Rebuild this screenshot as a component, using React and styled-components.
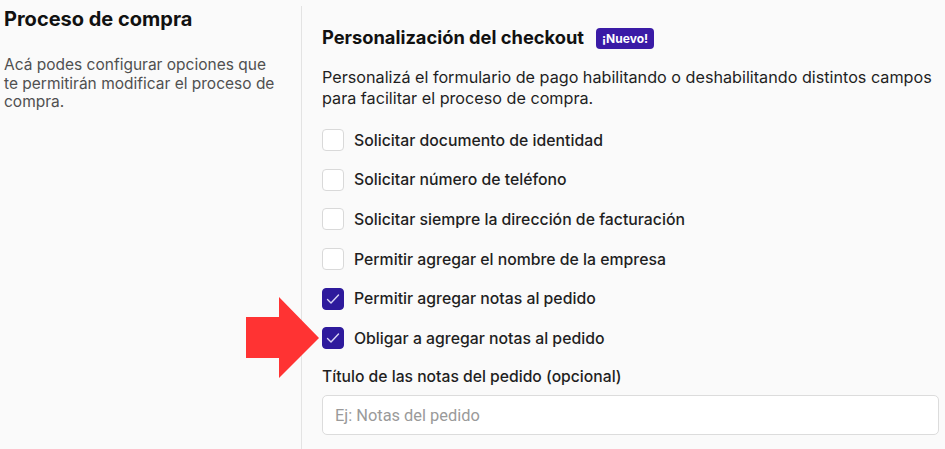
import React from "react";
import styled, { createGlobalStyle } from "styled-components";

const GlobalStyle = createGlobalStyle`
    html, body {
        margin: 0;
        padding: 0;
        background: #fafafa;
        font-family: Inter, "Noto Sans", sans-serif;
        color: #1f1f1f;
    }
`

const Page = styled.div`
    position: relative;
    display: grid;
    grid-template-columns: 301px 1fr;
    width: 945px;
    height: 449px;
    overflow: hidden;
`

const Side = styled.div`
    padding: 6px 20px 0 4px;
`

const SideTitle = styled.h1`
    margin: 0;
    font-size: 20px;
    line-height: 26px;
    font-weight: 700;
    color: #111;
`

const SideText = styled.p`
    margin: 24px 0 0;
    font-size: 15.5px;
    line-height: 18.5px;
    color: #505050;
`

const Main = styled.div`
    margin-top: 6px;
    border-left: 1px solid #e3e3e3;
    padding: 18px 6px 0 20px;
`

const Heading = styled.div`
    display: flex;
    align-items: center;
    gap: 12px;
    height: 26px;
`

const HeadingText = styled.h2`
    margin: 0;
    font-size: 18.3px;
    font-weight: 700;
    color: #111;
`

const Badge = styled.span`
    background: #3a1ba6;
    color: #fff;
    font-size: 12px;
    font-weight: 700;
    line-height: 21px;
    padding: 0 6px;
    border-radius: 4px;
    margin-top: 2px;
`

const Intro = styled.p`
    margin: 17px 0 0;
    font-size: 16.18px;
    line-height: 21px;
    color: #1f1f1f;
`

const Options = styled.div`
    display: flex;
    flex-direction: column;
    gap: 17.7px;
    margin-top: 20px;
`

const Option = styled.label`
    display: flex;
    align-items: center;
    gap: 10px;
    height: 22px;
    font-size: 15.8px;
    font-weight: 500;
    color: #1f1f1f;
`

const Box = styled.span`
    display: flex;
    align-items: center;
    justify-content: center;
    width: 22px;
    height: 22px;
    box-sizing: border-box;
    border-radius: 4px;
    border: 1px solid ${(p) => (p.$checked ? "#2e1a9c" : "#d9d9d9")};
    background: ${(p) => (p.$checked ? "#2e1a9c" : "#fff")};
`

const FieldLabel = styled.div`
    margin-top: 18px;
    font-size: 15.7px;
    line-height: 20px;
    font-weight: 500;
    color: #1f1f1f;
`

const Input = styled.input`
    display: block;
    margin-top: 8px;
    width: 100%;
    height: 40px;
    box-sizing: border-box;
    border: 1px solid #dcdcdc;
    border-radius: 5px;
    background: #fff;
    padding: 0 12px;
    font-family: Roboto, sans-serif;
    font-size: 16.4px;
    outline: none;
    &::placeholder {
        color: #9a9a9a;
    }
`

const Arrow = styled.svg`
    position: absolute;
    left: 246px;
    top: 297px;
`

const options = [
    { label: "Solicitar documento de identidad", checked: false },
    { label: "Solicitar número de teléfono", checked: false },
    { label: "Solicitar siempre la dirección de facturación", checked: false },
    { label: "Permitir agregar el nombre de la empresa", checked: false },
    { label: "Permitir agregar notas al pedido", checked: true },
    { label: "Obligar a agregar notas al pedido", checked: true },
]

const Check = () => (
    <svg width="16" height="16" viewBox="0 0 16 16">
        <polyline points="2.5,8.5 6,12 13.5,4" fill="none" stroke="#d9d4f5" strokeWidth="1.4" strokeLinecap="round" strokeLinejoin="round" />
    </svg>
)

const App = () => {
    return (
        <Page>
            <GlobalStyle />
            <Side>
                <SideTitle>Proceso de compra</SideTitle>
                <SideText>Acá podes configurar opciones que te permitirán modificar el proceso de compra.</SideText>
            </Side>
            <Main>
                <Heading>
                    <HeadingText>Personalización del checkout</HeadingText>
                    <Badge>¡Nuevo!</Badge>
                </Heading>
                <Intro>
                    Personalizá el formulario de pago habilitando o deshabilitando distintos campos para facilitar el proceso de compra.
                </Intro>
                <Options>
                    {options.map((o) => (
                        <Option key={o.label}>
                            <Box $checked={o.checked}>{o.checked && <Check />}</Box>
                            {o.label}
                        </Option>
                    ))}
                </Options>
                <FieldLabel>Título de las notas del pedido (opcional)</FieldLabel>
                <Input placeholder="Ej: Notas del pedido" />
            </Main>
            <Arrow width="74" height="82" viewBox="0 0 74 82">
                <polygon points="0,20 33,20 33,0 73,41 33,81 33,61 0,61" fill="#ff3333" />
            </Arrow>
        </Page>
    );
};

export default App;
